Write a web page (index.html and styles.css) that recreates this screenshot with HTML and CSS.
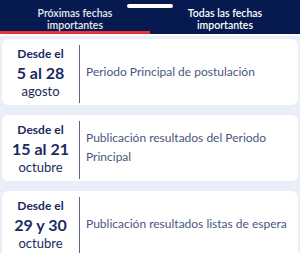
FILE: index.html
```html
<!DOCTYPE html>
<html lang="es">
<head>
    <meta charset="UTF-8">
    <meta name="viewport" content="width=device-width, initial-scale=1.0">
    <title>Fechas importantes</title>
    <link rel="stylesheet" href="styles.css">
</head>
<body>
    <div class="tabs">
        <span class="handle"></span>
        <div class="tab active">Próximas fechas<br>importantes</div>
        <div class="tab">Todas las fechas<br>importantes</div>
    </div>

    <div class="list">
        <div class="card">
            <div class="date">
                <span class="from">Desde el</span>
                <span class="days">5 al 28</span>
                <span class="month">agosto</span>
            </div>
            <p class="text">Periodo Principal de postulación</p>
        </div>

        <div class="card">
            <div class="date">
                <span class="from">Desde el</span>
                <span class="days">15 al 21</span>
                <span class="month">octubre</span>
            </div>
            <p class="text">Publicación resultados del Periodo Principal</p>
        </div>

        <div class="card">
            <div class="date">
                <span class="from">Desde el</span>
                <span class="days">29 y 30</span>
                <span class="month">octubre</span>
            </div>
            <p class="text">Publicación resultados listas de espera</p>
        </div>
    </div>
</body>
</html>
```

FILE: styles.css
```css
body {
    font-family: Lato, "Open Sans", sans-serif;
    margin: 0;
    background-color: #e9eef9;
    overflow: hidden;
}
.tabs {
    position: relative;
    display: flex;
    background-color: #061a4f;
    border-bottom: 2px solid #fff;
}
.handle {
    position: absolute;
    top: 4px;
    left: 127px;
    width: 46px;
    height: 4px;
    border-radius: 2px;
    background-color: #fff;
}
.tab {
    flex: 1;
    height: 34px;
    padding-top: 7px;
    box-sizing: border-box;
    text-align: center;
    color: #fff;
    font-size: 10.5px;
    font-weight: 600;
    line-height: 12px;
    border-bottom: 3px solid transparent;
}
.tab.active {
    border-bottom-color: #e8323c;
    color: #e6e9f2;
}
.list {
    display: flex;
    flex-direction: column;
    gap: 10px;
    padding: 3px 2px 0;
}
.card {
    display: flex;
    align-items: center;
    background-color: #fff;
    border-radius: 6px;
    padding: 6px 0 2px;
}
.date {
    display: flex;
    flex-direction: column;
    align-items: center;
    width: 77px;
    flex-shrink: 0;
    border-right: 1px solid #5b6386;
    color: #1b2a5e;
    padding-bottom: 2px;
}
.from {
    font-size: 12px;
    font-weight: bold;
    line-height: 18px;
}
.days {
    font-size: 16px;
    font-weight: bold;
    line-height: 19px;
}
.month {
    font-size: 13px;
    line-height: 19px;
}
.text {
    margin: 0 0 0 6px;
    padding: 0 8px 6px 0;
    font-size: 12px;
    line-height: 19px;
    color: #4a5680;
}
```
